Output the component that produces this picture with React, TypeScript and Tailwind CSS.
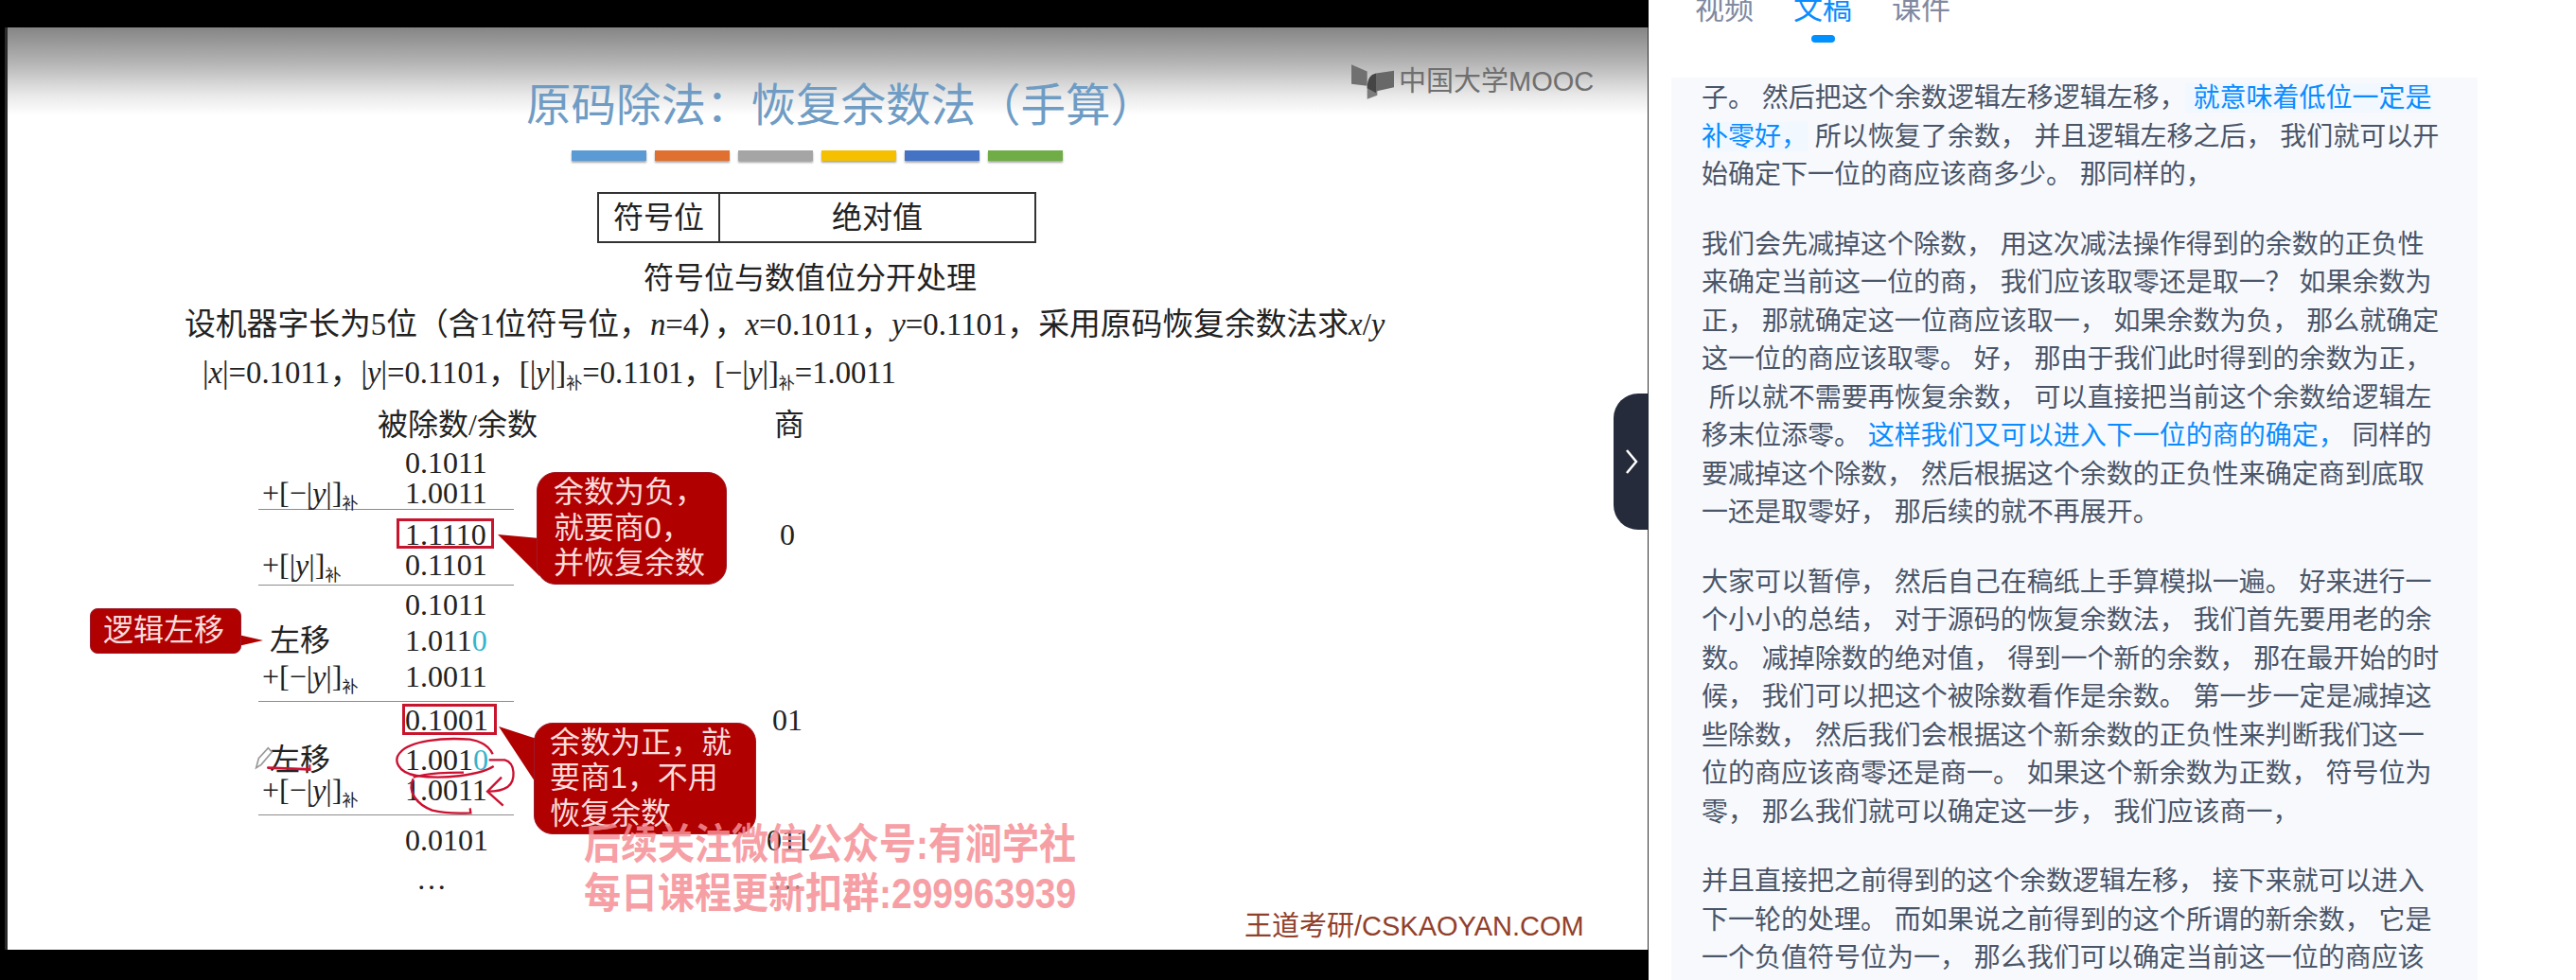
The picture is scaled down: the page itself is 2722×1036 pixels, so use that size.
const serif = "font-['Liberation_Serif','Noto_Sans_CJK_SC',serif] text-[#222]";
const sansStack = "font-['Liberation_Sans','Noto_Sans_CJK_SC',sans-serif]";

function Label({ minus, shift }: { minus?: boolean; shift?: boolean }) {
  if (shift) return <span className="pl-2">左移</span>;
  return (
    <span>
      +[{minus ? "−" : ""}|<i>y</i>|]<span className="text-[17px] align-[-6px]">补</span>
    </span>
  );
}

function MathRow({
  className,
  label,
  value,
  quotient,
}: {
  className: string;
  label?: React.ReactNode;
  value?: React.ReactNode;
  quotient?: string;
}) {
  return (
    <div className={`flex h-8 leading-8 ml-[269px] ${className}`}>
      <div className="w-[151px] whitespace-nowrap">{label}</div>
      <div className="w-[382px] whitespace-nowrap">{value}</div>
      <div className="w-11 text-center">{quotient}</div>
    </div>
  );
}

function Rule({ className }: { className: string }) {
  return <div className={`ml-[265px] w-[270px] h-px bg-[#8c8c8c] ${className}`} />;
}

function Callout({ className, lines }: { className: string; lines: string[] }) {
  return (
    <div
      className={`absolute flex flex-col justify-center bg-[#b00000] border border-[#9c1a2a] text-[#fbdcdc] text-[32px] leading-[37.5px] whitespace-nowrap ${sansStack} ${className}`}
    >
      {lines.map((line) => (
        <div key={line}>{line}</div>
      ))}
    </div>
  );
}

function Slide() {
  return (
    <div className={`ml-[5px] h-[975px] border-l-[3px] border-l-[#2b2b2b] border-r border-r-[#333] bg-[linear-gradient(to_bottom,#858585_0px,#b5b5b5_38px,#e8e8e8_71px,#fdfdfd_91px,#ffffff_93px)] overflow-hidden text-[32px] ${serif}`}>
      <h1 className="ml-[548px] mt-[60px] text-[47.5px] leading-[46px] whitespace-nowrap text-[#6f9cc4]">
        原码除法&#xFF1A;恢复余数法&#xFF08;手算&#xFF09;
      </h1>
      <div className="ml-[596px] mt-6 flex gap-[9px]">
        <div className="w-[79px] h-[11px] bg-[#5b9bd5] shadow-[0_2px_2px_rgba(0,0,0,0.35)]" />
        <div className="w-[79px] h-[11px] bg-[#e07030] shadow-[0_2px_2px_rgba(0,0,0,0.35)]" />
        <div className="w-[79px] h-[11px] bg-[#a5a5a5] shadow-[0_2px_2px_rgba(0,0,0,0.35)]" />
        <div className="w-[79px] h-[11px] bg-[#f5c000] shadow-[0_2px_2px_rgba(0,0,0,0.35)]" />
        <div className="w-[79px] h-[11px] bg-[#4472c4] shadow-[0_2px_2px_rgba(0,0,0,0.35)]" />
        <div className="w-[79px] h-[11px] bg-[#70ad47] shadow-[0_2px_2px_rgba(0,0,0,0.35)]" />
      </div>
      <div className="ml-[623px] mt-[33px] w-[464px] h-[54px] border-2 border-[#333] grid grid-cols-[128px_1fr] leading-[50px] text-center">
        <div className="border-r-2 border-[#333]">符号位</div>
        <div>绝对值</div>
      </div>
      <p className="ml-[672px] mt-[17px] leading-10 whitespace-nowrap">符号位与数值位分开处理</p>
      <p className="ml-[187px] mt-[9px] text-[32.8px] leading-10 whitespace-nowrap">
        设机器字长为5位&#xFF08;含1位符号位&#xFF0C;<i>n</i>=4&#xFF09;&#xFF0C;<i>x</i>=0.1011&#xFF0C;<i>y</i>=0.1101&#xFF0C;采用原码恢复余数法求<i>x</i>/<i>y</i>
      </p>
      <p className="ml-[206px] mt-[11px] text-[32.7px] leading-10 whitespace-nowrap">
        |<i>x</i>|=0.1011&#xFF0C;|<i>y</i>|=0.1101&#xFF0C;[|<i>y</i>|]<span className="text-[17px] align-[-6px]">补</span>=0.1101&#xFF0C;[−|<i>y</i>|]<span className="text-[17px] align-[-6px]">补</span>=1.0011
      </p>
      <div className="ml-[391px] mt-[3px] flex leading-10">
        <div className="w-[419px] whitespace-nowrap">被除数/余数</div>
        <div>商</div>
      </div>
      <MathRow className="mt-1" value="0.1011" />
      <MathRow label={<Label minus />} value="1.0011" />
      <Rule className="mt-px" />
      <MathRow className="mt-2.5" value="1.1110" quotient="0" />
      <MathRow label={<Label />} value="0.1101" />
      <Rule className="mt-[5px]" />
      <MathRow className="mt-1" value="0.1011" />
      <MathRow
        className="mt-1.5"
        label={<Label shift />}
        value={<>1.011<span className="text-[#35b4cc]">0</span></>}
      />
      <MathRow className="mt-1.5" label={<Label minus />} value="1.0011" />
      <Rule className="mt-2.5" />
      <MathRow className="mt-[3px]" value="0.1001" quotient="01" />
      <MathRow
        className="mt-2.5"
        label={<Label shift />}
        value={<>1.001<span className="text-[#35b4cc]">0</span></>}
      />
      <MathRow label={<Label minus />} value="1.0011" />
      <Rule className="mt-2.5" />
      <MathRow className="mt-2.5" value="0.0101" quotient="011" />
      <MathRow className="mt-[9px]" value={<span className="pl-3">…</span>} quotient="…" />
    </div>
  );
}

function VideoPane() {
  return (
    <div className="relative w-[1742px] h-full shrink-0 bg-black pt-[29px]">
      <Slide />

      {/* overlays on the slide */}
      <div className="absolute left-[1428px] top-[68px] flex items-center gap-[5px]">
        <svg width="45" height="37" viewBox="0 0 135 110">
          <path d="M0 0 L50 22 L50 68 L0 62 Z" fill="#707070" />
          <path d="M50 68 L50 110 L82 98 L82 80 Z" fill="#7c7c7c" />
          <path d="M50 75 C50 45 60 32 78 28 L78 90 Z" fill="#454545" />
          <path d="M78 28 L135 20 L135 72 L78 85 Z" fill="#686868" />
        </svg>
        <span className={`text-[29px] leading-none whitespace-nowrap text-[#6f6f6f] ${sansStack}`}>中国大学MOOC</span>
      </div>

      <div className="absolute left-[419px] top-[548px] w-[103px] h-8 border-[3px] border-[#c8142c]" />
      <div className="absolute left-[425px] top-[744px] w-[100px] h-[33px] border-[3px] border-[#c8142c]" />

      <svg className="absolute left-0 top-0" width="1742" height="1036" viewBox="0 0 1742 1036">
        <polygon points="526,565 570,569 570,609" fill="#b00000" />
        <polygon points="527,768 567,781 567,829" fill="#b00000" />
        <polygon points="278,677 252,671 252,683" fill="#b00000" />
      </svg>

      <Callout className="left-[567px] top-[499px] w-[201px] h-[119px] rounded-[20px] pl-[17px]" lines={["余数为负\uFF0C", "就要商0\uFF0C", "并恢复余数"]} />
      <Callout className="left-[564px] top-[764px] w-[235px] h-[118px] rounded-[20px] pl-4" lines={["余数为正\uFF0C就", "要商1\uFF0C不用", "恢复余数"]} />
      <Callout className="left-[95px] top-[643px] w-40 h-12 rounded-lg pl-[13px]" lines={["逻辑左移"]} />

      {/* pen marks */}
      <svg className="absolute left-[240px] top-[700px]" width="400" height="240" viewBox="0 0 1200 720" fill="none">
        <path d="M92 335 L100 305 L130 272 L142 285 L108 325 Z" stroke="#999" strokeWidth="5" fill="#fff" />
        <path d="M130 335 L262 340" stroke="#d01030" strokeWidth="8" strokeLinecap="round" />
        <path d="M262 325 L262 345" stroke="#d01030" strokeWidth="6" />
        <path
          d="M845 330 C800 360 680 372 600 360 C540 350 525 310 550 285 C580 250 680 238 770 245 C800 250 830 265 842 292"
          stroke="#cc1030"
          strokeWidth="7"
        />
        <path d="M830 310 L880 310 C915 320 915 375 890 395 C870 408 845 410 828 410" stroke="#cc1030" strokeWidth="7" />
        <path d="M870 365 L825 410 L875 455" stroke="#cc1030" strokeWidth="7" />
        <path d="M590 365 C640 350 700 350 750 350" stroke="#cc1030" strokeWidth="7" />
        <path d="M590 370 C570 410 600 450 650 470 C690 480 730 480 772 478 L770 463" stroke="#cc1030" strokeWidth="7" />
      </svg>

      <div className={`absolute left-[617px] top-[870px] flex flex-col gap-[6px] text-[39px] font-bold leading-[46px] whitespace-nowrap text-[#f58f96] opacity-85 ${sansStack}`}>
        <div className="scale-y-[1.15]">后续关注微信公众号:有涧学社</div>
        <div className="scale-y-[1.15]">每日课程更新扣群:299963939</div>
      </div>

      <div className={`absolute left-[1315px] top-[962px] text-[29px] leading-[34px] whitespace-nowrap text-[#91402a] ${sansStack}`}>
        王道考研/CSKAOYAN.COM
      </div>

      {/* collapse handle */}
      <div className="absolute right-0 top-[416px] w-[37px] h-[144px] rounded-l-[26px] bg-[#252b3a] flex items-center justify-center">
        <svg width="16" height="26" viewBox="0 0 16 26" fill="none">
          <path d="M3 1 L13 13 L3 25" stroke="#fff" strokeWidth="2.5" />
        </svg>
      </div>
    </div>
  );
}

function TranscriptPane() {
  return (
    <div className={`flex-1 h-full flex flex-col overflow-hidden bg-white ${sansStack}`}>
      <div className="h-[82px] shrink-0 pl-[49px] flex gap-[42px] text-[31px] leading-[31px] -mt-1.5 text-[#8089a0]">
        <div>视频</div>
        <div className="flex flex-col items-center text-[#0a8cff]">
          文稿
          <div className="mt-[12px] w-[25px] h-2 rounded-full bg-[#0090ff]" />
        </div>
        <div>课件</div>
      </div>
      <div className="ml-6 w-[852px] flex-1 mt-1.5 pl-8 pt-[2px] bg-[#f7f9fd] text-[28px] leading-[40.5px] whitespace-pre text-[#4a5568] overflow-hidden">
        <div className="mb-[33px]">
          <div>
            子。 然后把这个余数逻辑左移逻辑左移&#xFF0C;<span className="bg-[#f2f8ff] text-[#0a8cff]"> 就意味着低位一定是</span>
          </div>
          <div>
            <span className="bg-[#f2f8ff] text-[#0a8cff]">补零好&#xFF0C;</span> 所以恢复了余数&#xFF0C; 并且逻辑左移之后&#xFF0C; 我们就可以开
          </div>
          <div>始确定下一位的商应该商多少。 那同样的&#xFF0C;</div>
        </div>
        <div className="mb-[33px]">
          <div>我们会先减掉这个除数&#xFF0C; 用这次减法操作得到的余数的正负性</div>
          <div>来确定当前这一位的商&#xFF0C; 我们应该取零还是取一&#xFF1F; 如果余数为</div>
          <div>正&#xFF0C; 那就确定这一位商应该取一&#xFF0C; 如果余数为负&#xFF0C; 那么就确定</div>
          <div>这一位的商应该取零。 好&#xFF0C; 那由于我们此时得到的余数为正&#xFF0C;</div>
          <div> 所以就不需要再恢复余数&#xFF0C; 可以直接把当前这个余数给逻辑左</div>
          <div>
            移末位添零。 <span className="text-[#0a8cff]">这样我们又可以进入下一位的商的确定&#xFF0C;</span> 同样的
          </div>
          <div>要减掉这个除数&#xFF0C; 然后根据这个余数的正负性来确定商到底取</div>
          <div>一还是取零好&#xFF0C; 那后续的就不再展开。</div>
        </div>
        <div className="mb-[33px]">
          <div>大家可以暂停&#xFF0C; 然后自己在稿纸上手算模拟一遍。 好来进行一</div>
          <div>个小小的总结&#xFF0C; 对于源码的恢复余数法&#xFF0C; 我们首先要用老的余</div>
          <div>数。 减掉除数的绝对值&#xFF0C; 得到一个新的余数&#xFF0C; 那在最开始的时</div>
          <div>候&#xFF0C; 我们可以把这个被除数看作是余数。 第一步一定是减掉这</div>
          <div>些除数&#xFF0C; 然后我们会根据这个新余数的正负性来判断我们这一</div>
          <div>位的商应该商零还是商一。 如果这个新余数为正数&#xFF0C; 符号位为</div>
          <div>零&#xFF0C; 那么我们就可以确定这一步&#xFF0C; 我们应该商一&#xFF0C;</div>
        </div>
        <div>
          <div>并且直接把之前得到的这个余数逻辑左移&#xFF0C; 接下来就可以进入</div>
          <div>下一轮的处理。 而如果说之前得到的这个所谓的新余数&#xFF0C; 它是</div>
          <div>一个负值符号位为一&#xFF0C; 那么我们可以确定当前这一位的商应该</div>
        </div>
      </div>
    </div>
  );
}

export default function App() {
  return (
    <div className="flex w-[2722px] h-[1036px] overflow-hidden bg-white">
      <VideoPane />
      <TranscriptPane />
    </div>
  );
}
